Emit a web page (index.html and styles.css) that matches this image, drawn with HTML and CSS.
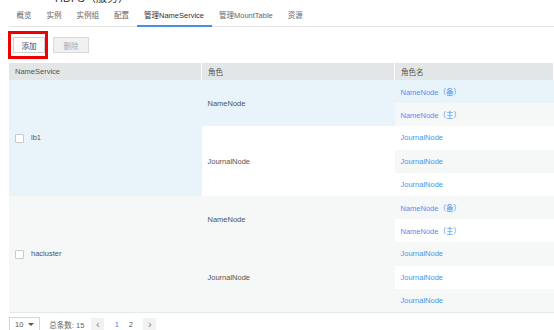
FILE: index.html
```html
<!DOCTYPE html>
<html lang="zh-CN">
<head>
    <meta charset="UTF-8">
    <meta name="viewport" content="width=device-width, initial-scale=1.0">
    <title>管理NameService</title>
    <link rel="stylesheet" href="styles.css">
</head>
<body>
    <div class="page">
        <div class="title-bar">
            <span class="back">&lt;</span>
            <span class="dot dot-green"></span>
            <span class="dot dot-yellow"></span>
            <span class="title">HDFS（服务）</span>
        </div>

        <ul class="tabs">
            <li>概览</li>
            <li>实例</li>
            <li>实例组</li>
            <li>配置</li>
            <li class="active">管理NameService</li>
            <li>管理MountTable</li>
            <li>资源</li>
        </ul>

        <div class="toolbar">
            <span class="highlight"><button class="btn">添加</button></span>
            <button class="btn" disabled>删除</button>
        </div>

        <table class="grid">
            <thead>
                <tr>
                    <th class="col-ns">NameService</th>
                    <th class="col-role">角色</th>
                    <th>角色名</th>
                </tr>
            </thead>
            <tbody>
                <tr>
                    <td rowspan="5" class="hover"><span class="check"></span>lb1</td>
                    <td rowspan="2" class="hover">NameNode</td>
                    <td class="hover"><a href="#">NameNode（备）</a></td>
                </tr>
                <tr>
                    <td class="stripe"><a href="#">NameNode（主）</a></td>
                </tr>
                <tr>
                    <td rowspan="3">JournalNode</td>
                    <td><a href="#">JournalNode</a></td>
                </tr>
                <tr>
                    <td class="stripe"><a href="#">JournalNode</a></td>
                </tr>
                <tr>
                    <td><a href="#">JournalNode</a></td>
                </tr>
                <tr>
                    <td rowspan="5" class="stripe"><span class="check"></span>hacluster</td>
                    <td rowspan="2" class="stripe">NameNode</td>
                    <td class="stripe"><a href="#">NameNode（备）</a></td>
                </tr>
                <tr>
                    <td><a href="#">NameNode（主）</a></td>
                </tr>
                <tr>
                    <td rowspan="3" class="stripe">JournalNode</td>
                    <td class="stripe"><a href="#">JournalNode</a></td>
                </tr>
                <tr>
                    <td><a href="#">JournalNode</a></td>
                </tr>
                <tr>
                    <td class="stripe"><a href="#">JournalNode</a></td>
                </tr>
            </tbody>
        </table>

        <div class="pager">
            <span class="size">10 <span class="caret"></span></span>
            <span class="total">总条数: 15</span>
            <span class="arrow">&lsaquo;</span>
            <span class="num current">1</span>
            <span class="num">2</span>
            <span class="arrow next">&rsaquo;</span>
        </div>
    </div>
</body>
</html>
```

FILE: styles.css
```css
body {
    font-family: "Liberation Sans", "Noto Sans CJK SC", sans-serif;
    font-size: 7.5px;
    color: #555;
    margin: 0;
    padding: 0;
    background: white;
    overflow: hidden;
}
.page {
    padding: 0 0 0 9px;
}
.title-bar {
    display: flex;
    align-items: center;
    gap: 6px;
    height: 12px;
    margin-top: -9px;
    font-size: 11px;
    color: #333;
}
.back {
    color: #888;
    width: 12px;
}
.dot {
    width: 6px;
    height: 6px;
    border-radius: 50%;
}
.dot-green {
    background: #3cc7a5;
}
.dot-green {
    margin-left: 4px;
}
.dot-yellow {
    background: #f2c230;
}
.tabs {
    display: flex;
    list-style: none;
    margin: 0;
    padding: 0;
    border-bottom: 1px solid #e4e4e4;
    height: 23px;
}
.tabs li {
    padding: 0 7.5px;
    line-height: 25px;
    color: #666;
}
.tabs li.active {
    color: #333;
    border-bottom: 2px solid #4a90e2;
    margin-bottom: -1px;
}
.toolbar {
    display: flex;
    align-items: center;
    gap: 5px;
    margin-top: 4px;
    margin-left: -1px;
}
.highlight {
    display: inline-flex;
    border: 3px solid #f10000;
    padding: 3px 0 3px 2px;
}
.btn {
    font-family: inherit;
    font-size: 7.5px;
    height: 16px;
    width: 32px;
    padding: 0;
    background: white;
    border: 1px solid #cfcfcf;
    color: #444;
}
.btn[disabled] {
    width: 36px;
    background: #f1f1f1;
    border-color: #d9d9d9;
    color: #aaa;
}
.grid {
    margin-top: 4px;
    width: 545px;
    border-collapse: collapse;
    table-layout: fixed;
    border-bottom: 1px solid #e6e8e8;
}
.grid th {
    background: #e3e6e6;
    color: #555;
    font-weight: normal;
    text-align: left;
    height: 17px;
    padding: 0 6px;
    border-right: 1px solid white;
}
.col-ns,
.col-role {
    width: 180px;
}
.grid td {
    height: 23.2px;
    padding: 0 6px;
    vertical-align: middle;
    background: white;
}
.grid td.hover {
    background: #e8f4fa;
}
.grid td.stripe {
    background: #f6f7f7;
}
.grid a {
    color: #4d94ee;
    text-decoration: none;
}
.check {
    display: inline-block;
    width: 7px;
    height: 7px;
    border: 1px solid #c9c9c9;
    border-radius: 1px;
    background: white;
    vertical-align: middle;
    margin-right: 7px;
}
.pager {
    display: flex;
    align-items: center;
    gap: 7px;
    margin-top: 5px;
    height: 14px;
}
.size {
    display: inline-flex;
    align-items: center;
    gap: 5px;
    border: 1px solid #d4d4d4;
    height: 13px;
    padding: 0 5px;
}
.caret {
    width: 0;
    height: 0;
    border-left: 3px solid transparent;
    border-right: 3px solid transparent;
    border-top: 3px solid #555;
}
.total {
    color: #666;
    margin-left: 2px;
}
.arrow {
    width: 13px;
    height: 13px;
    line-height: 12px;
    text-align: center;
    background: #f2f2f2;
    color: #888;
    font-size: 11px;
}
.num {
    width: 7px;
    text-align: center;
    color: #555;
}
.num.current {
    color: #3d8ee8;
    margin-left: 2px;
}
.next {
    margin-left: 2px;
}
```
